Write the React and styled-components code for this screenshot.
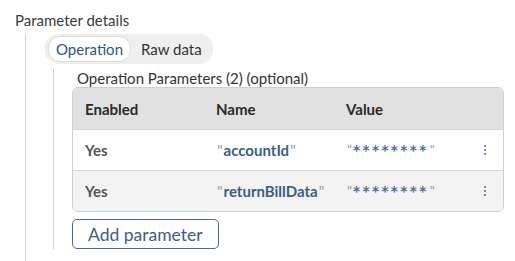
import styled, { createGlobalStyle } from 'styled-components'

const Global = createGlobalStyle`
body {
  margin: 0;
  background: #fff;
  font-family: Lato, "Noto Sans", sans-serif;
  color: #333;
}
`;

const Page = styled.div`
padding: 10px 0 0 15px;
width: 500px;
`;
const Title = styled.div`
font-size: 15px;
line-height: 20px;
color: #3a3a3a;
`;
const Branch = styled.div`
margin: 4px 0 0 10px;
padding: 0 0 13px 19px;
border-left: 1px solid #d0d0d0;
`;
const Tabs = styled.div`
display: inline-flex;
align-items: center;
gap: 2px;
padding: 2px 3px;
background: #efefef;
border-radius: 14px;
`;
const Tab = styled.div`
padding: 4px 7px 4px;
font-size: 15px;
line-height: 16px;
border-radius: 12px;
color: ${({ active }) => (active ? '#2f5584' : '#333')};
background: ${({ active }) => (active ? '#fff' : 'transparent')};
border: 1px solid ${({ active }) => (active ? '#dcdcdc' : 'transparent')};
`;
const Inner = styled.div`
margin: 5px 0 0 8px;
padding: 0 0 0 18px;
border-left: 1px solid #d0d0d0;
`;
const Caption = styled.div`
font-size: 15px;
line-height: 18px;
color: #333;
margin-left: 5px;
`;
const Table = styled.div`
width: 430px;
border: 1px solid #cfcfcf;
border-radius: 6px;
overflow: hidden;
`;
const Row = styled.div`
display: grid;
grid-template-columns: 131px 130px 1fr 36px;
align-items: center;
height: ${({ head }) => (head ? '41px' : '40px')};
padding-left: 12px;
font-size: 15px;
background: ${({ bg }) => bg};
border-top: ${({ head }) => (head ? 'none' : '1px solid #d6d6d6')};
`;
const HeadCell = styled.div`
font-weight: 700;
color: #2a2a2a;
`;
const Enabled = styled.div`
font-weight: 700;
color: #555;
`;
const Name = styled.div`
font-weight: 700;
color: #3c5d88;
`;
const Quote = styled.span`
font-family: Lato, sans-serif;
font-weight: 400;
letter-spacing: 0;
color: #8a9bb3;
margin: 0 1px;
`;
const Value = styled.div`
font-family: "DejaVu Sans", sans-serif;
font-size: 13.5px;
font-weight: 700;
color: #4f6d96;
letter-spacing: 2.4px;
`;
const Kebab = styled.div`
display: flex;
flex-direction: column;
align-items: center;
gap: 2px;
span {
  width: 2px;
  height: 2px;
  background: #4a6a94;
  border-radius: 1px;
}
`;
const AddButton = styled.button`
margin-top: 7px;
height: 30px;
padding: 0 15px;
border: 1px solid #50698c;
border-radius: 5px;
background: #fff;
color: #3c5d88;
font-family: Lato, sans-serif;
font-size: 17.5px;
`;

const params = [
  { name: 'accountId', bg: '#fff' },
  { name: 'returnBillData', bg: '#f3f3f3' },
];

const App = () => {
  return (
    <Page>
      <Global />
      <Title>Parameter details</Title>
      <Branch>
        <Tabs>
          <Tab active>Operation</Tab>
          <Tab>Raw data</Tab>
        </Tabs>
        <Inner>
          <Caption>Operation Parameters (2) (optional)</Caption>
          <Table>
            <Row head bg="#e1e1e1">
              <HeadCell>Enabled</HeadCell>
              <HeadCell>Name</HeadCell>
              <HeadCell>Value</HeadCell>
              <div />
            </Row>
            {params.map((p) => (
              <Row key={p.name} bg={p.bg}>
                <Enabled>Yes</Enabled>
                <Name><Quote>"</Quote>{p.name}<Quote>"</Quote></Name>
                <Value><Quote>"</Quote>********<Quote>"</Quote></Value>
                <Kebab><span /><span /><span /></Kebab>
              </Row>
            ))}
          </Table>
          <AddButton>Add parameter</AddButton>
        </Inner>
      </Branch>
    </Page>
  )
}

export default App
